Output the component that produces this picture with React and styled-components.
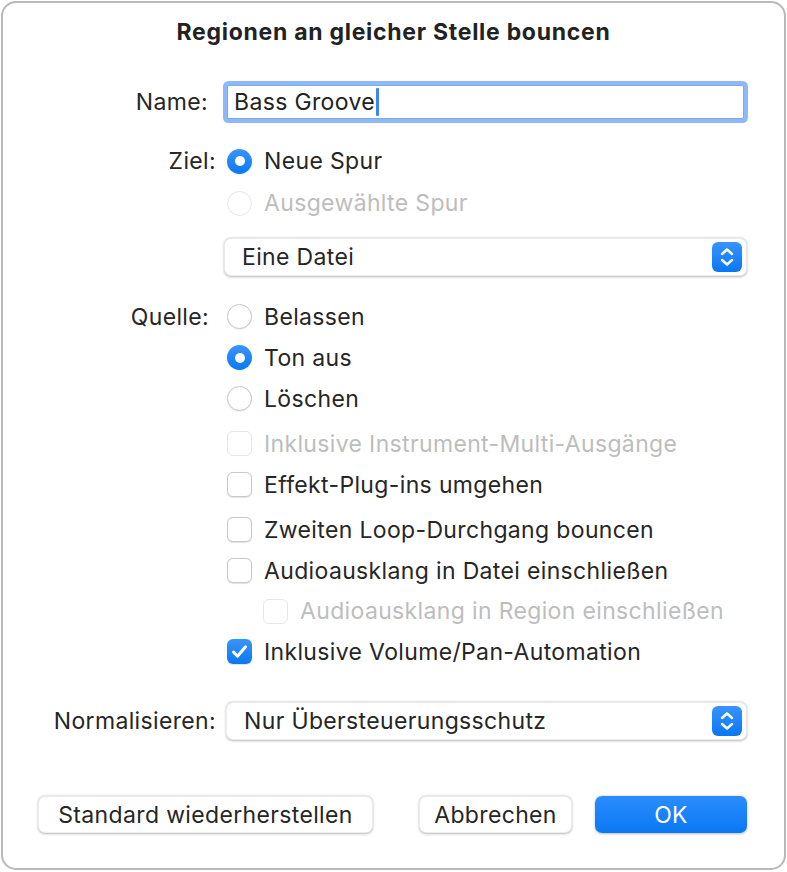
import styled, { createGlobalStyle } from "styled-components";

const Global = createGlobalStyle`
    html, body {
        margin: 0;
        padding: 0;
        background: #ffffff;
    }
    body {
        font-family: Inter, "Noto Sans", "Liberation Sans", sans-serif;
        color: #262626;
    }
`

function Stepper() {
    return (
        <StepBox>
            <svg width="30" height="30" viewBox="0 0 30 30">
                <path d="M10 12 L15 7.5 L20 12" fill="none" stroke="#fff" strokeWidth="2.4" strokeLinecap="round" strokeLinejoin="round" />
                <path d="M10 18 L15 22.5 L20 18" fill="none" stroke="#fff" strokeWidth="2.4" strokeLinecap="round" strokeLinejoin="round" />
            </svg>
        </StepBox>
    )
}

function Radio({ checked, disabled, children }) {
    return (
        <Option $disabled={disabled}>
            <RadioDot $checked={checked} $disabled={disabled} />
            <span>{children}</span>
        </Option>
    )
}

function Check({ checked, disabled, indent, children }) {
    return (
        <Option $disabled={disabled} $indent={indent}>
            <Box $checked={checked} $disabled={disabled}>
                {checked && (
                    <svg width="25" height="25" viewBox="0 0 25 25">
                        <path d="M6.5 13 L10.5 17.2 L18.5 7.8" fill="none" stroke="#fff" strokeWidth="3" strokeLinecap="round" strokeLinejoin="round" />
                    </svg>
                )}
            </Box>
            <span>{children}</span>
        </Option>
    )
}

export default function App() {
    return (
        <>
            <Global />
            <Window>
                <Title>Regionen an gleicher Stelle bouncen</Title>

                <Row $h={44} $mt={34}>
                    <Label $pr={8}>Name:</Label>
                    <Field>
                        Bass Groove<Caret />
                    </Field>
                </Row>

                <Row $h={42} $mt={16}>
                    <Label>Ziel:</Label>
                    <Radio checked>Neue Spur</Radio>
                </Row>
                <Row $h={42}>
                    <Label />
                    <Radio disabled>Ausgewählte Spur</Radio>
                </Row>
                <Row $h={38} $mt={14}>
                    <Label />
                    <Popup>
                        <span>Eine Datei</span>
                        <Stepper />
                    </Popup>
                </Row>

                <Row $h={41} $mt={20}>
                    <Label $pr={7}>Quelle:</Label>
                    <Radio>Belassen</Radio>
                </Row>
                <Row $h={41}>
                    <Label />
                    <Radio checked>Ton aus</Radio>
                </Row>
                <Row $h={41}>
                    <Label />
                    <Radio>Löschen</Radio>
                </Row>
                <Row $h={41} $mt={4}>
                    <Label />
                    <Check disabled>Inklusive Instrument-Multi-Ausgänge</Check>
                </Row>
                <Row $h={41}>
                    <Label />
                    <Check>Effekt-Plug-ins umgehen</Check>
                </Row>
                <Row $h={41} $mt={4}>
                    <Label />
                    <Check>Zweiten Loop-Durchgang bouncen</Check>
                </Row>
                <Row $h={41}>
                    <Label />
                    <Check>Audioausklang in Datei einschließen</Check>
                </Row>
                <Row $h={40}>
                    <Label />
                    <Check disabled indent>Audioausklang in Region einschließen</Check>
                </Row>
                <Row $h={41}>
                    <Label />
                    <Check checked>Inklusive Volume/Pan-Automation</Check>
                </Row>

                <Row $h={38} $mt={30}>
                    <Label>Normalisieren:</Label>
                    <Popup $ml={2}>
                        <span>Nur Übersteuerungsschutz</span>
                        <Stepper />
                    </Popup>
                </Row>

                <Buttons>
                    <Button $w={335}>Standard wiederherstellen</Button>
                    <Spacer />
                    <Button $w={153}>Abbrechen</Button>
                    <Button $w={152} $primary>OK</Button>
                </Buttons>
            </Window>
        </>
    )
}

const Window = styled.div`
    box-sizing: border-box;
    margin: 1px 0 0 1px;
    width: 785px;
    height: 869px;
    border: 2px solid #b9b9b9;
    border-radius: 15px;
    background: #ffffff;
    padding: 15px 37px 0 0;
    display: flex;
    flex-direction: column;
    font-size: 23px;
    letter-spacing: 0.35px;
`

const Title = styled.div`
    height: 28px;
    line-height: 28px;
    text-align: center;
    font-weight: 700;
    font-size: 23px;
    letter-spacing: 0.72px;
    color: #222;
    padding-left: 37px;
`

const Row = styled.div`
    display: grid;
    grid-template-columns: 213px 1fr;
    column-gap: 8px;
    align-items: center;
    height: ${p => p.$h}px;
    margin-top: ${p => p.$mt || 0}px;
`

const Label = styled.div`
    text-align: right;
    padding-right: ${p => p.$pr || 0}px;
    color: #262626;
    white-space: nowrap;
`

const Field = styled.div`
    box-sizing: border-box;
    margin: 0 3px;
    height: 34px;
    border: 1px solid #7fa9ee;
    background: #fff;
    box-shadow: 0 0 0 4px #8db8fa;
    border-radius: 2px;
    display: flex;
    align-items: center;
    padding-left: 6px;
    color: #222;
`

const Caret = styled.span`
    display: inline-block;
    width: 3px;
    height: 28px;
    margin-left: 1px;
    border-radius: 1px;
    background: #3d86f5;
`

const Option = styled.div`
    display: flex;
    align-items: center;
    gap: 12px;
    margin-left: ${p => (p.$indent ? 39 : 3)}px;
    color: ${p => (p.$disabled ? "#bdbdbd" : "#262626")};
    white-space: nowrap;
`

const RadioDot = styled.div`
    box-sizing: border-box;
    width: 25px;
    height: 25px;
    border-radius: 50%;
    flex: none;
    background: ${p => (p.$checked ? "linear-gradient(#3b94fd, #0a78f2)" : "#fff")};
    border: ${p => (p.$checked ? "none" : p.$disabled ? "1px solid #e6e6e6" : "1px solid #c9c9c9")};
    box-shadow: ${p => (p.$disabled ? "none" : "0 0.5px 1px rgba(0,0,0,0.12)")};
    display: flex;
    align-items: center;
    justify-content: center;

    &::after {
        content: "";
        display: ${p => (p.$checked ? "block" : "none")};
        width: 10px;
        height: 10px;
        border-radius: 50%;
        background: #fff;
    }
`

const Box = styled.div`
    box-sizing: border-box;
    width: 25px;
    height: 25px;
    border-radius: 6px;
    flex: none;
    background: ${p => (p.$checked ? "linear-gradient(#3b94fd, #0a78f2)" : "#fff")};
    border: ${p => (p.$checked ? "none" : p.$disabled ? "1px solid #e6e6e6" : "1px solid #c9c9c9")};
    box-shadow: ${p => (p.$disabled ? "none" : "0 0.5px 1px rgba(0,0,0,0.12)")};
    display: flex;
`

const Popup = styled.div`
    box-sizing: border-box;
    height: 38px;
    margin-left: ${p => p.$ml || 0}px;
    border-radius: 7px;
    background: #fff;
    border: 0.5px solid rgba(0, 0, 0, 0.08);
    box-shadow: 0 0.5px 2.5px rgba(0, 0, 0, 0.28);
    display: flex;
    align-items: center;
    justify-content: space-between;
    padding: 0 4px 0 17px;
    color: #262626;
`

const StepBox = styled.div`
    width: 30px;
    height: 30px;
    border-radius: 6px;
    background: linear-gradient(#3993fd, #0a77f2);
    display: flex;
`

const Buttons = styled.div`
    display: flex;
    align-items: center;
    gap: 23px;
    margin-top: 56px;
    padding-left: 35px;
`

const Spacer = styled.div`
    flex: 1;
`

const Button = styled.div`
    box-sizing: border-box;
    width: ${p => p.$w}px;
    height: 37px;
    border-radius: 7px;
    display: flex;
    align-items: center;
    justify-content: center;
    background: ${p => (p.$primary ? "linear-gradient(#2a8dfd, #0a78f4)" : "#fff")};
    color: ${p => (p.$primary ? "#fff" : "#262626")};
    border: ${p => (p.$primary ? "none" : "0.5px solid rgba(0,0,0,0.08)")};
    box-shadow: 0 0.5px 2.5px rgba(0, 0, 0, 0.28);
    white-space: nowrap;
`
